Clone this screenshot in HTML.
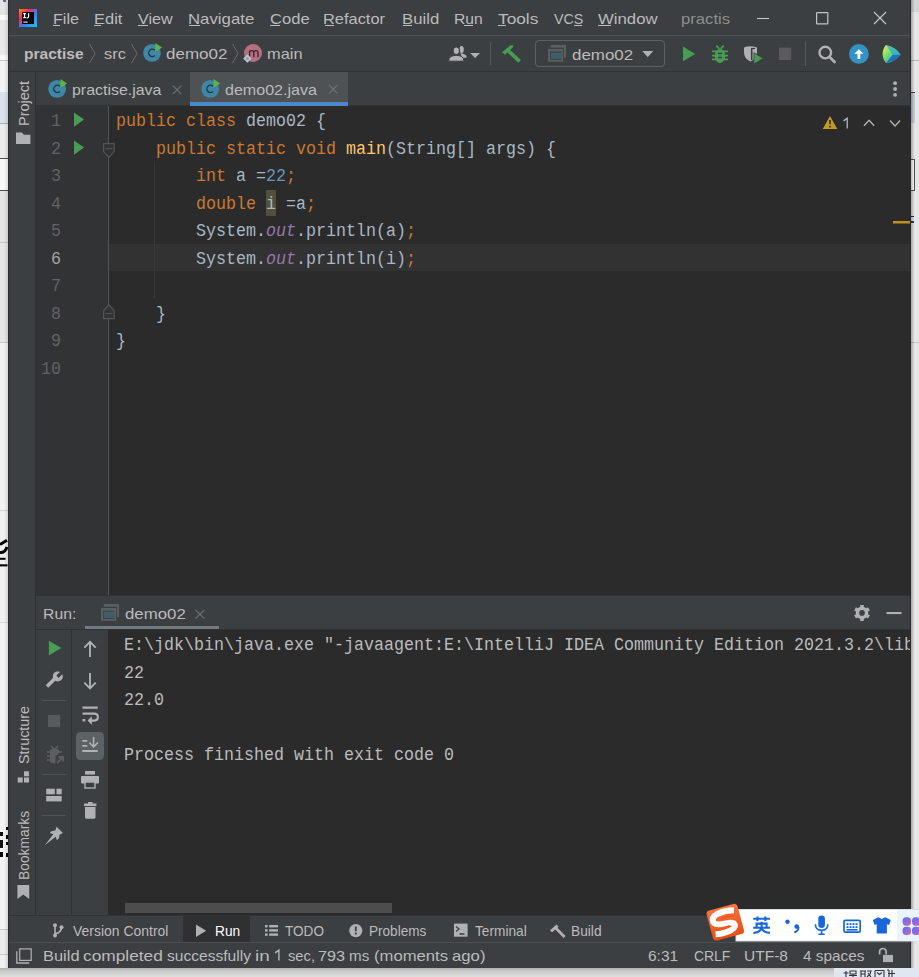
<!DOCTYPE html>
<html><head><meta charset="utf-8">
<style>
*{margin:0;padding:0;box-sizing:border-box}
html,body{width:919px;height:977px;overflow:hidden;background:#f0f0f0;font-family:"Liberation Sans",sans-serif;position:relative}
.a{position:absolute}
.t{position:absolute;white-space:pre}
.m{font-family:'Liberation Mono',monospace}
svg{position:absolute;overflow:visible}
</style></head><body>
<div class="a" style="left:0;top:0;width:8px;height:977px;background:#f2f2f2"></div>
<div class="a" style="left:0px;top:0px;width:8px;height:15px;background:#e2e4e6;"></div>
<div class="a" style="left:3px;top:0px;width:3px;height:2px;background:#6a6a90;"></div>
<div class="a" style="left:0px;top:15px;width:8px;height:5px;background:#fafafa;"></div>
<div class="a" style="left:0px;top:20px;width:8px;height:35px;background:#e9e9e9;"></div>
<div class="a" style="left:0px;top:55px;width:8px;height:5px;background:#f8f8f8;"></div>
<div class="a" style="left:0px;top:60px;width:8px;height:1px;background:#c8c8c8;"></div>
<div class="a" style="left:0px;top:61px;width:8px;height:31px;background:#f3f3f3;"></div>
<div class="a" style="left:0px;top:92px;width:8px;height:31px;background:#d9e3ee;"></div>
<div class="a" style="left:0px;top:123px;width:8px;height:1px;background:#a8b0b8;"></div>
<div class="a" style="left:0px;top:124px;width:8px;height:34px;background:#ececec;"></div>
<div class="a" style="left:0px;top:158px;width:8px;height:1px;background:#505050;"></div>
<div class="a" style="left:0px;top:159px;width:8px;height:31px;background:#f8f8f8;"></div>
<div class="a" style="left:0px;top:190px;width:8px;height:1px;background:#505050;"></div>
<div class="a" style="left:0px;top:191px;width:8px;height:51px;background:#e4e4e4;"></div>
<div class="a" style="left:0px;top:242px;width:8px;height:1px;background:#c4c4c4;"></div>
<div class="a" style="left:0px;top:243px;width:8px;height:99px;background:#e6e6e6;"></div>
<div class="a" style="left:0px;top:342px;width:8px;height:1px;background:#c8c8c8;"></div>
<div class="a" style="left:0px;top:343px;width:8px;height:167px;background:#f1f1f0;"></div>
<div class="a" style="left:0px;top:510px;width:8px;height:1px;background:#d0d0d0;"></div>
<div class="a" style="left:0px;top:511px;width:8px;height:111px;background:#f0f0ee;"></div>
<div class="a" style="left:0px;top:622px;width:8px;height:1px;background:#d4d4d4;"></div>
<div class="a" style="left:0px;top:623px;width:8px;height:306px;background:#f3f3f3;"></div>
<div class="a" style="left:0px;top:929px;width:8px;height:1px;background:#c8c8c8;"></div>
<div class="a" style="left:0px;top:930px;width:8px;height:24px;background:#ededed;"></div>
<div class="a" style="left:0px;top:954px;width:8px;height:1px;background:#c8c8c8;"></div>
<div class="a" style="left:0px;top:955px;width:8px;height:22px;background:#f0f0f0;"></div>
<svg class="a" style="left:0;top:0" width="8" height="977"><path d="M0 544.5L7 540.2" stroke="#000" stroke-width="3"/><path d="M0 552.5Q5 553 7 547" stroke="#000" stroke-width="3" fill="none"/><rect x="0" y="557.8" width="5.5" height="2" fill="#000"/><rect x="0" y="564.3" width="7.5" height="2.1" fill="#000"/><rect x="6" y="827" width="2" height="3" fill="#000"/><rect x="6" y="835" width="2" height="4" fill="#000"/><rect x="6" y="842" width="2" height="3" fill="#000"/><rect x="6" y="853" width="2" height="4" fill="#000"/><rect x="0" y="832" width="3" height="4" fill="#000"/><rect x="0" y="840" width="3" height="8" fill="#111"/><rect x="0" y="852" width="3" height="5" fill="#000"/></svg>
<div class="a" style="left:4px;top:0;width:4px;height:977px;background:linear-gradient(90deg,rgba(0,0,0,0),rgba(0,0,0,0.12))"></div>
<div class="a" style="left:911px;top:0;width:8px;height:977px;background:#e6e6e6"></div>
<div class="a" style="left:911px;top:0px;width:8px;height:12px;background:#d2d4d6;"></div>
<div class="a" style="left:911px;top:60px;width:8px;height:1px;background:#b8b8b8;"></div>
<div class="a" style="left:911px;top:342px;width:8px;height:1px;background:#c4c4c4;"></div>
<div class="a" style="left:911px;top:92px;width:4px;height:1px;background:#404040;"></div>
<div class="a" style="left:911px;top:93px;width:4px;height:30px;background:#c5ced8;"></div>
<div class="a" style="left:911px;top:159px;width:4px;height:32px;background:#ffffff;border:1px solid #505050;border-left:none"></div>
<div class="a" style="left:911px;top:216px;width:3px;height:1px;background:#1a2a80;"></div>
<div class="a" style="left:911px;top:221px;width:3px;height:2px;background:#2a3a90;"></div>
<div class="a" style="left:911px;top:0;width:3px;height:977px;background:linear-gradient(90deg,rgba(0,0,0,0.28),rgba(0,0,0,0.05))"></div>
<div class="a" style="left:0;top:968px;width:919px;height:9px;background:linear-gradient(#b4b4b4,#cbcbcb 40%,#dedede)"></div>
<div class="a" style="left:8px;top:0px;width:903px;height:968px;background:#3c3f41;"></div>
<div class="a" style="left:8px;top:0px;width:1px;height:968px;background:#2b2b2b;"></div>
<div class="a" style="left:910px;top:0px;width:1px;height:968px;background:#2b2b2b;"></div>
<div class="a" style="left:9px;top:35px;width:901px;height:1px;background:#4f5051;"></div>
<div class="a" style="left:9px;top:71px;width:901px;height:1px;background:#2f3133;"></div>
<div class="a" style="left:35px;top:72px;width:1px;height:844px;background:#2f3133;"></div>
<div class="a" style="left:190px;top:72px;width:158px;height:33px;background:#4e5254;"></div>
<div class="a" style="left:36px;top:105px;width:874px;height:1px;background:#323232;"></div>
<div class="a" style="left:190px;top:102px;width:158px;height:4px;background:#4a88c7;"></div>
<div class="a" style="left:36px;top:106px;width:874px;height:489px;background:#2b2b2b;"></div>
<div class="a" style="left:36px;top:106px;width:72px;height:489px;background:#313335;"></div>
<div class="a" style="left:108px;top:106px;width:1px;height:489px;background:#555555;"></div>
<div class="a" style="left:109px;top:244px;width:801px;height:27px;background:#323232;"></div>
<div class="a" style="left:36px;top:595px;width:874px;height:1px;background:#323232;"></div>
<div class="a" style="left:36px;top:596px;width:874px;height:33px;background:#3c3f41;"></div>
<div class="a" style="left:85px;top:626px;width:134px;height:3px;background:#737980;"></div>
<div class="a" style="left:36px;top:629px;width:874px;height:1px;background:#2f3133;"></div>
<div class="a" style="left:36px;top:630px;width:35px;height:286px;background:#3c3f41;"></div>
<div class="a" style="left:71px;top:630px;width:1px;height:286px;background:#323232;"></div>
<div class="a" style="left:72px;top:630px;width:36px;height:286px;background:#3c3f41;"></div>
<div class="a" style="left:108px;top:630px;width:802px;height:286px;background:#2b2b2b;"></div>
<div class="a" style="left:125px;top:903px;width:267px;height:10px;background:#4d4d4d;"></div>
<div class="a" style="left:9px;top:915px;width:901px;height:1px;background:#323232;"></div>
<div class="a" style="left:9px;top:916px;width:901px;height:26px;background:#3c3f41;"></div>
<div class="a" style="left:183px;top:916px;width:67px;height:26px;background:#2e3032;"></div>
<div class="a" style="left:9px;top:942px;width:901px;height:1px;background:#4b4d4f;"></div>
<div class="a" style="left:9px;top:943px;width:901px;height:25px;background:#3c3f41;"></div>
<svg class="a" style="left:0;top:0" width="919" height="977" viewBox="0 0 919 977"><defs><linearGradient id="ijg" x1="0" y1="0" x2="1" y2="1"><stop offset="0" stop-color="#ff8a1a"/><stop offset="0.3" stop-color="#fe2857"/><stop offset="0.55" stop-color="#3d7bf5"/><stop offset="1" stop-color="#11c8f7"/></linearGradient><linearGradient id="cwm" x1="0" y1="0" x2="1" y2="1"><stop offset="0" stop-color="#f5f04a"/><stop offset="0.5" stop-color="#5dd67a"/><stop offset="1" stop-color="#1ab0e8"/></linearGradient></defs><rect x="19" y="9" width="18" height="18" fill="url(#ijg)"/><rect x="22" y="12" width="12" height="12" fill="#0b0308"/><path d="M23.2 13.6h2.8M24.6 13.6v4M23.2 17.6h2.8M28.6 13.2v3.4q0 1.2-1.1 1.2h-1" stroke="#fff" stroke-width="1.15" fill="none"/><rect x="23.3" y="21.6" width="4.5" height="1" fill="#fff"/><path d="M757 18.5h12" stroke="#c4c4c4" stroke-width="1.1"/><rect x="816.6" y="12.6" width="11.2" height="11.2" rx="0.6" stroke="#c4c4c4" stroke-width="1.2" fill="none"/><path d="M874 12l12 12M886 12l-12 12" stroke="#c4c4c4" stroke-width="1.15"/><path d="M89.5 44l5.5 9.5l-5.5 9.5" stroke="#6b6e70" stroke-width="1" fill="none"/><path d="M131.5 44l5.5 9.5l-5.5 9.5" stroke="#6b6e70" stroke-width="1" fill="none"/><path d="M232.5 44l5.5 9.5l-5.5 9.5" stroke="#6b6e70" stroke-width="1" fill="none"/><circle cx="152" cy="52.9" r="8.9" fill="#3f87a6"/><path d="M154.8 50.3A3.6 3.6 0 1 0 154.8 55.5" stroke="#233843" stroke-width="1.4" fill="none"/><path d="M155.4 42.9l6.6 4.6l-6.6 4.2z" fill="#5fb445"/><circle cx="57.1" cy="88.9" r="8.9" fill="#3f87a6"/><path d="M59.9 86.30000000000001A3.6 3.6 0 1 0 59.9 91.5" stroke="#233843" stroke-width="1.4" fill="none"/><path d="M60.5 78.9l6.6 4.6l-6.6 4.2z" fill="#5fb445"/><circle cx="210.2" cy="88.9" r="8.9" fill="#3f87a6"/><path d="M213.0 86.30000000000001A3.6 3.6 0 1 0 213.0 91.5" stroke="#233843" stroke-width="1.4" fill="none"/><path d="M213.6 78.9l6.6 4.6l-6.6 4.2z" fill="#5fb445"/><circle cx="253" cy="53" r="9" fill="#b5707f"/><path d="M249.6 57.3v-6.6M249.6 52.4q0-1.7 2.1-1.7q2.1 0 2.1 1.9v4.7M253.8 52.4q0-1.7 2.1-1.7q2.1 0 2.1 1.9v4.7" stroke="#3b2329" stroke-width="1.3" fill="none"/><path d="M247.4 54.2l4.3 4.3l-4.3 4.3l-4.3-4.3z" fill="#b3c6cd"/><circle cx="247.4" cy="58.5" r="1.3" fill="#c47c8a"/><ellipse cx="461.6" cy="49.6" rx="2.2" ry="3.5" fill="#afb1b3"/><path d="M460.5 53.2q4.5 0.2 6.3 3.6l-0.8 1h-4z" fill="#afb1b3"/><ellipse cx="456.3" cy="50.7" rx="3.2" ry="3.8" stroke="#3c3f41" stroke-width="1.1" fill="#afb1b3"/><path d="M448.6 61.2q0.2-3.4 2.2-4.6q2-1.1 5.5-1.3q3.5 0.2 5.5 1.3q2 1.2 2.2 4.6z" stroke="#3c3f41" stroke-width="1" fill="#afb1b3"/><path d="M470.2 52.9h9.8l-4.9 5z" fill="#afb1b3"/><rect x="490" y="42" width="1" height="23" fill="#55585a"/><path d="M502 52.3L510.6 45.2L513.6 45.6L512.6 47.4L505 54.8Z" fill="#499c54"/><path d="M508.2 50.6L519.6 61.4" stroke="#499c54" stroke-width="3.7"/><rect x="535.5" y="40.5" width="129" height="26" rx="3.5" stroke="#5e6163" stroke-width="1" fill="none"/><rect x="550.8" y="44.9" width="15.2" height="2.8" fill="#595e61"/><rect x="564" y="44.9" width="2" height="13" fill="#595e61"/><rect x="548" y="48.9" width="15.2" height="12.9" fill="#595e61"/><rect x="550" y="51.6" width="11.2" height="8.2" fill="#3c3f41"/><rect x="550.8" y="52.6" width="10.2" height="6.3" fill="#3e5e6b"/><path d="M642.3 51h10.9l-5.45 6.2z" fill="#afb1b3"/><path d="M683 46.6l12.2 7.3l-12.2 7.3z" fill="#499c54"/><ellipse cx="720" cy="56" rx="5.3" ry="7" fill="#499c54"/><path d="M716.3 45.7l3 3.2M723.7 45.7l-3 3.2M712 51.3h16M712 55.6h16M712 59.4h16" stroke="#499c54" stroke-width="1.8"/><path d="M718 53.6h4M718 57.4h4" stroke="#3c3f41" stroke-width="1.5"/><path d="M744 47.5q6.5-2.5 13 0v5q0 6-6.5 9q-6.5-3-6.5-9z" fill="#afb1b3"/><path d="M751.7 49v11" stroke="#3c3f41" stroke-width="1.6"/><path d="M751 48.5h4" stroke="#3c3f41" stroke-width="1.2"/><path d="M753.9 52.7l9.2 5.7l-9.2 5.7z" fill="#499c54" stroke="#3c3f41" stroke-width="0.8"/><rect x="779" y="47.6" width="12.2" height="12.4" fill="#595b5d"/><rect x="805" y="41.5" width="1" height="24.5" fill="#55585a"/><circle cx="825.3" cy="52.6" r="5.8" stroke="#afb1b3" stroke-width="2.4" fill="none"/><path d="M829.6 57l5 5" stroke="#afb1b3" stroke-width="2.6" stroke-linecap="round"/><circle cx="858.9" cy="53.9" r="9.9" fill="#3592c4"/><path d="M858.9 49.2l-4.6 4.6h3.2v5.2h2.8v-5.2h3.2z" fill="#fff"/><path d="M886 45q5 1 9 3.8q3.5 2.2 5.6 6q-3 4-8 6.4q-3.5 1.6-6.5 1.7q-3.5-4-3.5-9q0-5 3.4-8.9z" fill="url(#cwm)"/><path d="M892.6 54.8l8-0.1q-3 4-8 6.4q-3.5 1.6-6.5 1.7z" fill="#1f5fc5" opacity="0.85"/><path d="M886 45q5 1 9 3.8q3.5 2.2 5.6 6l-8 0.1z" fill="#1fa7d8" opacity="0.6"/><path d="M172.8 85.6l8.5 8.5M181.3 85.6l-8.5 8.5" stroke="#6e7072" stroke-width="1.2"/><path d="M329 85l8.5 8.5M337.5 85l-8.5 8.5" stroke="#6e7072" stroke-width="1.2"/><circle cx="895.1" cy="83.2" r="1.9" fill="#afb1b3"/><circle cx="895.1" cy="89" r="1.9" fill="#afb1b3"/><circle cx="895.1" cy="94.8" r="1.9" fill="#afb1b3"/><path d="M830 116l7.3 13.1h-14.6z" fill="#c29a25"/><path d="M830 120v4.3M830 125.8v1.6" stroke="#2b2b2b" stroke-width="1.6"/><path d="M864 125.8l5.1-5.5l5.1 5.5M890 120.5l5.05 5.5l5.05-5.5" stroke="#afb1b3" stroke-width="1.4" fill="none"/><path d="M74 112.5l10.1 7.1l-10.1 7.1z" fill="#499c54"/><path d="M74 140.5l10.1 7.1l-10.1 7.1z" fill="#499c54"/><path d="M103.6 143.6h10.6v8l-5.3 5.8l-5.3-5.8z" stroke="#555555" stroke-width="1.2" fill="#313335"/><path d="M105.5 148.6h6.8" stroke="#555555" stroke-width="1.1"/><path d="M103.6 318.6h10.6v-8l-5.3-5.8l-5.3 5.8z" stroke="#555555" stroke-width="1.2" fill="#313335"/><path d="M105.5 313.6h6.8" stroke="#555555" stroke-width="1.1"/><rect x="154" y="161" width="1" height="137" fill="#393939"/><rect x="893" y="221" width="17" height="2.5" fill="#be9117"/><path d="M16 132.5h6l1.8 2.2h6.6v9.3h-14.4z" fill="#afb1b3"/><rect x="24" y="771.3" width="5" height="5" fill="#afb1b3"/><rect x="17.7" y="777.5" width="5" height="5" fill="#afb1b3"/><rect x="24" y="777.5" width="5" height="5" fill="#afb1b3"/><path d="M17.4 885h11.8v14l-5.9-4.6l-5.9 4.6z" fill="#afb1b3"/><rect x="103.8" y="604" width="15.2" height="2.8" fill="#595e61"/><rect x="117" y="604" width="2" height="13" fill="#595e61"/><rect x="101" y="608" width="15.2" height="12.9" fill="#595e61"/><rect x="103" y="610.7" width="11.2" height="8.2" fill="#3c3f41"/><rect x="103.8" y="611.7" width="10.2" height="6.3" fill="#3e5e6b"/><path d="M195.5 609.8l8.8 8.8M204.3 609.8l-8.8 8.8" stroke="#6e7072" stroke-width="1.2"/><path d="M860.16 604.91 L863.84 604.91 L863.66 606.72 L866.53 608.37 L868.00 607.31 L869.84 610.50 L868.18 611.24 L868.18 614.56 L869.84 615.30 L868.00 618.49 L866.53 617.43 L863.66 619.08 L863.84 620.89 L860.16 620.89 L860.34 619.08 L857.47 617.43 L856.00 618.49 L854.16 615.30 L855.82 614.56 L855.82 611.24 L854.16 610.50 L856.00 607.31 L857.47 608.37 L860.34 606.72z" fill="#afb1b3"/><circle cx="862" cy="612.9" r="2.8" fill="#3c3f41"/><rect x="886.5" y="612" width="15" height="2.1" fill="#afb1b3"/><path d="M48.9 640.8l12.3 7.3l-12.3 7.3z" fill="#499c54"/><path d="M47 686.4L55.2 678.2" stroke="#afb1b3" stroke-width="3.6"/><circle cx="57.8" cy="676.4" r="5" fill="#afb1b3"/><rect x="57.3" y="674.8" width="8" height="3.2" fill="#3c3f41" transform="rotate(-45 57.8 676.4)"/><rect x="42" y="700" width="24" height="1" fill="#505254"/><rect x="48" y="715" width="12.2" height="12" fill="#585a5c"/><rect x="42" y="774" width="24" height="1" fill="#505254"/><rect x="42" y="815" width="24" height="1" fill="#505254"/><g fill="none" stroke="#5c5e60" stroke-width="1.6"><path d="M51 746l3 3M58 746l-3 3M47 752h15M47 756h6M47 760h6"/></g><path d="M50 750q4.5-3 9 0v3l-3.5 3.5v6.5q-2 1-5.5-1z" fill="#5c5e60"/><path d="M57 763l6-6M58.5 757h4.5v4.5" stroke="#5c5e60" stroke-width="1.8" fill="none"/><rect x="46.2" y="788.7" width="8.6" height="5.6" fill="#afb1b3"/><rect x="56.5" y="788.7" width="5.2" height="5.6" fill="#afb1b3"/><rect x="46.2" y="796" width="15.5" height="5.4" fill="#afb1b3"/><path d="M56.6 826.8l6.3 6.3l-3.4 1.6l-0.4 3.4l-2.2 2.2l-1.2-3.6l-10.9 8.5l8.5-10.9l-3.6-1.2l2.2-2.2l3.4-0.4z" fill="#afb1b3"/><path d="M90 642v15M84.3 647.6l5.7-5.7l5.7 5.7" stroke="#afb1b3" stroke-width="1.9" fill="none"/><path d="M90 673v15M84.3 682.6l5.7 5.7l5.7-5.7" stroke="#afb1b3" stroke-width="1.9" fill="none"/><path d="M82.5 707.6h15.2M82.5 713.6h11.6q3.8 0 3.8 3.5q0 3.5-3.8 3.5h-3.6" stroke="#afb1b3" stroke-width="2.1" fill="none"/><rect x="82.5" y="719" width="2.8" height="2.4" fill="#afb1b3"/><path d="M91.8 716.2l-4.2 4.4l4.2 4.4z" fill="#afb1b3"/><rect x="76" y="732" width="28" height="28" rx="4.5" fill="#5c6164"/><path d="M82.3 740.8h5M82.3 745.8h5M82.3 751h15.4" stroke="#afb1b3" stroke-width="1.8"/><path d="M93.6 737v9.5M89.4 742.6l4.2 4.2l4.2-4.2" stroke="#afb1b3" stroke-width="1.6" fill="none"/><rect x="85" y="771" width="10" height="3.6" fill="#afb1b3"/><rect x="81" y="776" width="18" height="7.6" rx="1" fill="#afb1b3"/><rect x="85" y="782" width="10" height="6" stroke="#afb1b3" stroke-width="1.4" fill="#3c3f41"/><rect x="84" y="803.5" width="12.4" height="2.6" fill="#afb1b3"/><rect x="88" y="802" width="4.5" height="2" fill="#afb1b3"/><path d="M85 807h10.5v10.3q0 1.4-1.4 1.4h-7.7q-1.4 0-1.4-1.4z" fill="#afb1b3"/><circle cx="55" cy="925.2" r="2" fill="#afb1b3"/><circle cx="55" cy="935.6" r="2" fill="#afb1b3"/><circle cx="61.5" cy="927.2" r="2" fill="#afb1b3"/><path d="M55 925v10.5M61.5 927.2q0 5.5-6.5 6.5" stroke="#afb1b3" stroke-width="1.6" fill="none"/><path d="M196 924.4l10.2 6.3l-10.2 6.3z" fill="#afb1b3"/><rect x="265" y="925" width="2.6" height="2.4" fill="#afb1b3"/><rect x="265" y="929.2" width="2.6" height="2.4" fill="#afb1b3"/><rect x="265" y="933.4" width="2.6" height="2.4" fill="#afb1b3"/><rect x="269.2" y="925" width="8.8" height="2.4" fill="#afb1b3"/><rect x="269.2" y="929.2" width="8.8" height="2.4" fill="#afb1b3"/><rect x="269.2" y="933.4" width="8.8" height="2.4" fill="#afb1b3"/><circle cx="355.8" cy="930.6" r="6.6" fill="#afb1b3"/><path d="M355.8 926.4v4.8M355.8 932.6v1.8" stroke="#3c3f41" stroke-width="1.8"/><rect x="454" y="923.6" width="13.6" height="13.1" fill="#afb1b3"/><path d="M456 926.5l3 2.5l-3 2.5M459.5 934h5" stroke="#3c3f41" stroke-width="1.3" fill="none"/><path d="M550 930.2l6.6-5.6l2 2.1l-1.6 1.6l-5 3.9z" fill="#afb1b3"/><path d="M556 928.3l8.6 8.6" stroke="#afb1b3" stroke-width="2.8"/><path d="M16.8 951.2V963H29.2" stroke="#afb1b3" stroke-width="1.3" fill="none"/><rect x="19.7" y="948.9" width="11.5" height="11.5" stroke="#afb1b3" stroke-width="1.2" fill="none"/><path d="M879.6 954.6v-2.8a3.3 3.3 0 0 1 6.6 0v2.6" stroke="#afb1b3" stroke-width="1.7" fill="none"/><rect x="883" y="954.9" width="10" height="7.2" fill="#afb1b3"/><rect x="736" y="909.5" width="183" height="31.5" fill="#ffffff" stroke="#d8dde3" stroke-width="1"/><rect x="897" y="910" width="22" height="30.5" fill="#eaf4fb"/><defs><linearGradient id="sgo" x1="0" y1="0" x2="0" y2="1"><stop offset="0" stop-color="#f7733f"/><stop offset="1" stop-color="#e84e14"/></linearGradient></defs><g transform="translate(725.3 922.2) rotate(-15)"><rect x="-16" y="-15.5" width="32" height="31" rx="3.5" fill="url(#sgo)"/><path d="M11.5 -9.2Q3 -11.5 -5 -10.2Q-12.5 -8.5 -11.5 -3.2Q-10.5 1 0 1.2Q8.5 1.4 8.6 5Q8.4 9.2 -1.5 9.8Q-8 10.2 -12.5 9.2" stroke="#fff" stroke-width="6" fill="none"/><path d="M9 -4.5Q2 -5.5 -3 -4.2M-9 6Q-3 5.2 3 4.5" stroke="#f05a22" stroke-width="1.6" fill="none"/></g><g stroke="#1667d9" stroke-width="2.1" fill="none"><path d="M753.2 918.8H769.9M757.5 916.6V921M765.3 916.6V921M756.6 928.5V923.6H766.6V928.5M761.6 921.8V928M753.2 927.8H769.9M761.4 928.3Q759.8 932.4 753.4 932.9M761.9 928.6Q763.6 932.4 769.9 932.9"/></g><circle cx="787.5" cy="921.7" r="2.2" fill="#1667d9"/><circle cx="796.7" cy="926.6" r="2.3" fill="#1667d9"/><path d="M798.6 927q0 3.5-4.3 5.6" stroke="#1667d9" stroke-width="1.8" fill="none"/><rect x="818.3" y="915.5" width="6.6" height="12.5" rx="3.3" fill="#1667d9"/><path d="M815.4 924.2q0 6 6.2 6q6.2 0 6.2-6M821.6 930.2v3.8M818.5 934.3h6.2" stroke="#1667d9" stroke-width="1.6" fill="none"/><rect x="844" y="920.3" width="16.2" height="11.8" rx="1.2" stroke="#1667d9" stroke-width="1.7" fill="none"/><rect x="846.5" y="923.2" width="2" height="1.8" fill="#1667d9"/><rect x="849.5" y="923.2" width="2" height="1.8" fill="#1667d9"/><rect x="852.5" y="923.2" width="2" height="1.8" fill="#1667d9"/><rect x="855.5" y="923.2" width="2" height="1.8" fill="#1667d9"/><rect x="846.5" y="926.2" width="2" height="1.8" fill="#1667d9"/><rect x="849.5" y="926.2" width="2" height="1.8" fill="#1667d9"/><rect x="852.5" y="926.2" width="2" height="1.8" fill="#1667d9"/><rect x="855.5" y="926.2" width="2" height="1.8" fill="#1667d9"/><rect x="846.5" y="929" width="11" height="1.6" fill="#1667d9"/><path d="M878.3 917.3l3.5 1.6l3.5-1.6l5.4 2.8l-1.6 4.8l-2.2-0.7v9.2h-10.2v-9.2l-2.2 0.7l-1.6-4.8z" fill="#1667d9"/><defs><linearGradient id="flw" x1="0" y1="0" x2="1" y2="1"><stop offset="0" stop-color="#5b6cf5"/><stop offset="0.5" stop-color="#8a6ae8"/><stop offset="1" stop-color="#e8607a"/></linearGradient></defs><g fill="url(#flw)"><rect x="902.6" y="917.3" width="8.4" height="8.4" rx="3.6"/><rect x="912" y="917.3" width="8.4" height="8.4" rx="3.6"/><rect x="902.6" y="926.7" width="8.4" height="8.4" rx="3.6"/><rect x="912" y="926.7" width="8.4" height="8.4" rx="3.6"/></g><rect x="834" y="968" width="85" height="9" fill="#dfe8f2"/><g stroke="#333" stroke-width="1.1" fill="none"><path d="M846 971v6M843.5 973h5M850 971h6v3h-6zM849 975.5h8M853 974v3"/><path d="M860 971h6M861 971v6M865 971v6M861 974h4M867 971h4l-1 3l-3 3M868 973l3 4"/><path d="M875 970.5h9v6.5M875 970.5v6.5M877 972.5l2.5 2l2.5-2"/><path d="M889 970v7M892 970v7M888 973.5h7M889 970h-2"/></g><path d="M843.6 120.9L847.2 118.4V128.6" stroke="#a9b7c6" stroke-width="1.35" fill="none"/><path d="M275.2 952.9L278.9 950.2V960.5" stroke="#bbbbbb" stroke-width="1.35" fill="none"/></svg>
<div class="t" style="left:52.71px;top:11.00px;font-size:15px;line-height:15px;color:#bbbbbb;font-family:'Liberation Sans';transform:scaleX(1.0762);transform-origin:0 0;">File</div>
<div class="t" style="left:93.68px;top:11.00px;font-size:15px;line-height:15px;color:#bbbbbb;font-family:'Liberation Sans';transform:scaleX(1.0976);transform-origin:0 0;">Edit</div>
<div class="t" style="left:138.19px;top:11.00px;font-size:15px;line-height:15px;color:#bbbbbb;font-family:'Liberation Sans';transform:scaleX(1.0745);transform-origin:0 0;">View</div>
<div class="t" style="left:188.06px;top:11.00px;font-size:15px;line-height:15px;color:#bbbbbb;font-family:'Liberation Sans';transform:scaleX(1.1185);transform-origin:0 0;">Navigate</div>
<div class="t" style="left:269.51px;top:11.00px;font-size:15px;line-height:15px;color:#bbbbbb;font-family:'Liberation Sans';transform:scaleX(1.1076);transform-origin:0 0;">Code</div>
<div class="t" style="left:323.49px;top:11.00px;font-size:15px;line-height:15px;color:#bbbbbb;font-family:'Liberation Sans';transform:scaleX(1.0940);transform-origin:0 0;">Refactor</div>
<div class="t" style="left:402.06px;top:11.00px;font-size:15px;line-height:15px;color:#bbbbbb;font-family:'Liberation Sans';transform:scaleX(1.1154);transform-origin:0 0;">Build</div>
<div class="t" style="left:453.75px;top:11.00px;font-size:15px;line-height:15px;color:#bbbbbb;font-family:'Liberation Sans';transform:scaleX(1.0433);transform-origin:0 0;">Run</div>
<div class="t" style="left:497.85px;top:11.00px;font-size:15px;line-height:15px;color:#bbbbbb;font-family:'Liberation Sans';transform:scaleX(1.1520);transform-origin:0 0;">Tools</div>
<div class="t" style="left:553.80px;top:11.00px;font-size:15px;line-height:15px;color:#bbbbbb;font-family:'Liberation Sans';transform:scaleX(0.9533);transform-origin:0 0;">VCS</div>
<div class="t" style="left:598.19px;top:11.00px;font-size:15px;line-height:15px;color:#bbbbbb;font-family:'Liberation Sans';transform:scaleX(1.1163);transform-origin:0 0;">Window</div>
<div class="a" style="left:53px;top:25px;width:7px;height:1px;background:#bbbbbb;"></div>
<div class="a" style="left:94px;top:25px;width:7px;height:1px;background:#bbbbbb;"></div>
<div class="a" style="left:138px;top:25px;width:10px;height:1px;background:#bbbbbb;"></div>
<div class="a" style="left:189px;top:25px;width:11px;height:1px;background:#bbbbbb;"></div>
<div class="a" style="left:270px;top:25px;width:10px;height:1px;background:#bbbbbb;"></div>
<div class="a" style="left:325px;top:25px;width:9px;height:1px;background:#bbbbbb;"></div>
<div class="a" style="left:403px;top:25px;width:9px;height:1px;background:#bbbbbb;"></div>
<div class="a" style="left:464px;top:25px;width:9px;height:1px;background:#bbbbbb;"></div>
<div class="a" style="left:498px;top:25px;width:8px;height:1px;background:#bbbbbb;"></div>
<div class="a" style="left:574px;top:25px;width:8px;height:1px;background:#bbbbbb;"></div>
<div class="a" style="left:598px;top:25px;width:13px;height:1px;background:#bbbbbb;"></div>
<div class="t" style="left:681.49px;top:11.00px;font-size:15px;line-height:15px;color:#8e8e8e;font-family:'Liberation Sans';transform:scaleX(1.1101);transform-origin:0 0;">practis</div>
<div class="t" style="left:23.56px;top:45.50px;font-size:15px;line-height:15px;color:#bbbbbb;font-family:'Liberation Sans';font-weight:bold;transform:scaleX(1.0357);transform-origin:0 0;">practise</div>
<div class="t" style="left:103.76px;top:45.50px;font-size:15px;line-height:15px;color:#bbbbbb;font-family:'Liberation Sans';transform:scaleX(1.0937);transform-origin:0 0;">src</div>
<div class="t" style="left:165.52px;top:45.50px;font-size:15px;line-height:15px;color:#bbbbbb;font-family:'Liberation Sans';transform:scaleX(1.1342);transform-origin:0 0;">demo02</div>
<div class="t" style="left:266.91px;top:45.50px;font-size:15px;line-height:15px;color:#bbbbbb;font-family:'Liberation Sans';transform:scaleX(1.0915);transform-origin:0 0;">main</div>
<div class="t" style="left:572.12px;top:46.50px;font-size:15px;line-height:15px;color:#bbbbbb;font-family:'Liberation Sans';transform:scaleX(1.1285);transform-origin:0 0;">demo02</div>
<div class="t" style="left:71.84px;top:81.60px;font-size:15px;line-height:15px;color:#bbbbbb;font-family:'Liberation Sans';transform:scaleX(1.0612);transform-origin:0 0;">practise.java</div>
<div class="t" style="left:225.36px;top:81.60px;font-size:15px;line-height:15px;color:#bbbbbb;font-family:'Liberation Sans';transform:scaleX(1.0703);transform-origin:0 0;">demo02.java</div>
<div class="t" style="left:43.44px;top:606.00px;font-size:15px;line-height:15px;color:#bbbbbb;font-family:'Liberation Sans';transform:scaleX(1.0515);transform-origin:0 0;">Run:</div>
<div class="t" style="left:125.33px;top:606.00px;font-size:15px;line-height:15px;color:#bbbbbb;font-family:'Liberation Sans';transform:scaleX(1.1210);transform-origin:0 0;">demo02</div>
<div class="t" style="left:72.81px;top:923.00px;font-size:15px;line-height:15px;color:#bbbbbb;font-family:'Liberation Sans';transform:scaleX(0.9310);transform-origin:0 0;">Version Control</div>
<div class="t" style="left:214.60px;top:923.00px;font-size:15px;line-height:15px;color:#ffffff;font-family:'Liberation Sans';transform:scaleX(0.9134);transform-origin:0 0;">Run</div>
<div class="t" style="left:284.53px;top:923.00px;font-size:15px;line-height:15px;color:#bbbbbb;font-family:'Liberation Sans';transform:scaleX(0.9050);transform-origin:0 0;">TODO</div>
<div class="t" style="left:368.61px;top:923.00px;font-size:15px;line-height:15px;color:#bbbbbb;font-family:'Liberation Sans';transform:scaleX(0.9044);transform-origin:0 0;">Problems</div>
<div class="t" style="left:474.73px;top:923.00px;font-size:15px;line-height:15px;color:#bbbbbb;font-family:'Liberation Sans';transform:scaleX(0.9134);transform-origin:0 0;">Terminal</div>
<div class="t" style="left:571.30px;top:923.00px;font-size:15px;line-height:15px;color:#bbbbbb;font-family:'Liberation Sans';transform:scaleX(0.9167);transform-origin:0 0;">Build</div>
<div class="t" style="left:42.68px;top:947.50px;font-size:15px;line-height:15px;color:#bbbbbb;font-family:'Liberation Sans';transform:scaleX(1.0962);transform-origin:0 0;">Build</div>
<div class="t" style="left:83.11px;top:947.50px;font-size:15px;line-height:15px;color:#bbbbbb;font-family:'Liberation Sans';transform:scaleX(1.1536);transform-origin:0 0;">completed</div>
<div class="t" style="left:167.38px;top:947.50px;font-size:15px;line-height:15px;color:#bbbbbb;font-family:'Liberation Sans';transform:scaleX(1.0385);transform-origin:0 0;">successfully</div>
<div class="t" style="left:255.34px;top:947.50px;font-size:15px;line-height:15px;color:#bbbbbb;font-family:'Liberation Sans';transform:scaleX(1.2577);transform-origin:0 0;">in</div>
<div class="t" style="left:287.61px;top:947.50px;font-size:15px;line-height:15px;color:#bbbbbb;font-family:'Liberation Sans';transform:scaleX(0.9805);transform-origin:0 0;">sec,</div>
<div class="t" style="left:317.94px;top:947.50px;font-size:15px;line-height:15px;color:#bbbbbb;font-family:'Liberation Sans';transform:scaleX(1.0805);transform-origin:0 0;">793</div>
<div class="t" style="left:349.09px;top:947.50px;font-size:15px;line-height:15px;color:#bbbbbb;font-family:'Liberation Sans';transform:scaleX(1.0108);transform-origin:0 0;">ms</div>
<div class="t" style="left:373.60px;top:947.50px;font-size:15px;line-height:15px;color:#bbbbbb;font-family:'Liberation Sans';transform:scaleX(1.1103);transform-origin:0 0;">(moments</div>
<div class="t" style="left:451.73px;top:947.50px;font-size:15px;line-height:15px;color:#bbbbbb;font-family:'Liberation Sans';transform:scaleX(1.1158);transform-origin:0 0;">ago)</div>
<div class="t" style="left:647.77px;top:948.00px;font-size:15px;line-height:15px;color:#bbbbbb;font-family:'Liberation Sans';transform:scaleX(1.0325);transform-origin:0 0;">6:31</div>
<div class="t" style="left:693.56px;top:948.00px;font-size:15px;line-height:15px;color:#bbbbbb;font-family:'Liberation Sans';transform:scaleX(0.9286);transform-origin:0 0;">CRLF</div>
<div class="t" style="left:743.86px;top:948.00px;font-size:15px;line-height:15px;color:#bbbbbb;font-family:'Liberation Sans';transform:scaleX(1.0343);transform-origin:0 0;">UTF-8</div>
<div class="t" style="left:803.19px;top:948.00px;font-size:15px;line-height:15px;color:#bbbbbb;font-family:'Liberation Sans';transform:scaleX(1.0236);transform-origin:0 0;">4 spaces</div>
<div class="t" style="left:16.40px;top:125.56px;font-size:15px;line-height:15px;color:#bbbbbb;transform-origin:0 0;transform:rotate(-90deg) scaleX(0.9648);">Project</div>
<div class="t" style="left:16.00px;top:763.77px;font-size:15px;line-height:15px;color:#bbbbbb;transform-origin:0 0;transform:rotate(-90deg) scaleX(0.9529);">Structure</div>
<div class="t" style="left:15.80px;top:879.81px;font-size:15px;line-height:15px;color:#bbbbbb;transform-origin:0 0;transform:rotate(-90deg) scaleX(0.9209);">Bookmarks</div>
<div class="a" style="left:266px;top:190px;width:10px;height:26px;background:#52503a;"></div>
<div class="t m" style="left:116.00px;top:112.20px;font-size:18px;line-height:18px;color:#cc7832;transform:scaleX(0.9258);transform-origin:0 0;">public</div>
<div class="t m" style="left:186.00px;top:112.20px;font-size:18px;line-height:18px;color:#cc7832;transform:scaleX(0.9258);transform-origin:0 0;">class</div>
<div class="t m" style="left:246.00px;top:112.20px;font-size:18px;line-height:18px;color:#a9b7c6;transform:scaleX(0.9258);transform-origin:0 0;">demo02 {</div>
<div class="t m" style="left:156.00px;top:139.70px;font-size:18px;line-height:18px;color:#cc7832;transform:scaleX(0.9258);transform-origin:0 0;">public</div>
<div class="t m" style="left:226.00px;top:139.70px;font-size:18px;line-height:18px;color:#cc7832;transform:scaleX(0.9258);transform-origin:0 0;">static</div>
<div class="t m" style="left:296.00px;top:139.70px;font-size:18px;line-height:18px;color:#cc7832;transform:scaleX(0.9258);transform-origin:0 0;">void</div>
<div class="t m" style="left:346.00px;top:139.70px;font-size:18px;line-height:18px;color:#ffc66d;transform:scaleX(0.9258);transform-origin:0 0;">main</div>
<div class="t m" style="left:386.00px;top:139.70px;font-size:18px;line-height:18px;color:#a9b7c6;transform:scaleX(0.9258);transform-origin:0 0;">(String[] args) {</div>
<div class="t m" style="left:196.00px;top:167.20px;font-size:18px;line-height:18px;color:#cc7832;transform:scaleX(0.9258);transform-origin:0 0;">int</div>
<div class="t m" style="left:236.00px;top:167.20px;font-size:18px;line-height:18px;color:#a9b7c6;transform:scaleX(0.9258);transform-origin:0 0;">a =</div>
<div class="t m" style="left:266.00px;top:167.20px;font-size:18px;line-height:18px;color:#6897bb;transform:scaleX(0.9258);transform-origin:0 0;">22</div>
<div class="t m" style="left:286.00px;top:167.20px;font-size:18px;line-height:18px;color:#cc7832;transform:scaleX(0.9258);transform-origin:0 0;">;</div>
<div class="t m" style="left:196.00px;top:194.70px;font-size:18px;line-height:18px;color:#cc7832;transform:scaleX(0.9258);transform-origin:0 0;">double</div>
<div class="t m" style="left:266.00px;top:194.70px;font-size:18px;line-height:18px;color:#a9b7c6;transform:scaleX(0.9258);transform-origin:0 0;">i =a</div>
<div class="t m" style="left:306.00px;top:194.70px;font-size:18px;line-height:18px;color:#cc7832;transform:scaleX(0.9258);transform-origin:0 0;">;</div>
<div class="t m" style="left:196.00px;top:222.20px;font-size:18px;line-height:18px;color:#a9b7c6;transform:scaleX(0.9258);transform-origin:0 0;">System.</div>
<div class="t m" style="left:266.00px;top:222.20px;font-size:18px;line-height:18px;color:#9876aa;transform:scaleX(0.9258);transform-origin:0 0;font-style:italic;">out</div>
<div class="t m" style="left:296.00px;top:222.20px;font-size:18px;line-height:18px;color:#a9b7c6;transform:scaleX(0.9258);transform-origin:0 0;">.println(a)</div>
<div class="t m" style="left:406.00px;top:222.20px;font-size:18px;line-height:18px;color:#cc7832;transform:scaleX(0.9258);transform-origin:0 0;">;</div>
<div class="t m" style="left:196.00px;top:249.70px;font-size:18px;line-height:18px;color:#a9b7c6;transform:scaleX(0.9258);transform-origin:0 0;">System.</div>
<div class="t m" style="left:266.00px;top:249.70px;font-size:18px;line-height:18px;color:#9876aa;transform:scaleX(0.9258);transform-origin:0 0;font-style:italic;">out</div>
<div class="t m" style="left:296.00px;top:249.70px;font-size:18px;line-height:18px;color:#a9b7c6;transform:scaleX(0.9258);transform-origin:0 0;">.println(i)</div>
<div class="t m" style="left:406.00px;top:249.70px;font-size:18px;line-height:18px;color:#cc7832;transform:scaleX(0.9258);transform-origin:0 0;">;</div>
<div class="t m" style="left:156.00px;top:304.70px;font-size:18px;line-height:18px;color:#a9b7c6;transform:scaleX(0.9258);transform-origin:0 0;">}</div>
<div class="t m" style="left:116.00px;top:332.20px;font-size:18px;line-height:18px;color:#a9b7c6;transform:scaleX(0.9258);transform-origin:0 0;">}</div>
<div class="t m" style="left:50.50px;top:112.20px;font-size:18px;line-height:18px;color:#606366;transform:scaleX(0.9258);transform-origin:0 0;">1</div>
<div class="t m" style="left:50.50px;top:139.70px;font-size:18px;line-height:18px;color:#606366;transform:scaleX(0.9258);transform-origin:0 0;">2</div>
<div class="t m" style="left:50.50px;top:167.20px;font-size:18px;line-height:18px;color:#606366;transform:scaleX(0.9258);transform-origin:0 0;">3</div>
<div class="t m" style="left:50.50px;top:194.70px;font-size:18px;line-height:18px;color:#606366;transform:scaleX(0.9258);transform-origin:0 0;">4</div>
<div class="t m" style="left:50.50px;top:222.20px;font-size:18px;line-height:18px;color:#606366;transform:scaleX(0.9258);transform-origin:0 0;">5</div>
<div class="t m" style="left:50.50px;top:249.70px;font-size:18px;line-height:18px;color:#a4a3a3;transform:scaleX(0.9258);transform-origin:0 0;">6</div>
<div class="t m" style="left:50.50px;top:277.20px;font-size:18px;line-height:18px;color:#606366;transform:scaleX(0.9258);transform-origin:0 0;">7</div>
<div class="t m" style="left:50.50px;top:304.70px;font-size:18px;line-height:18px;color:#606366;transform:scaleX(0.9258);transform-origin:0 0;">8</div>
<div class="t m" style="left:50.50px;top:332.20px;font-size:18px;line-height:18px;color:#606366;transform:scaleX(0.9258);transform-origin:0 0;">9</div>
<div class="t m" style="left:40.50px;top:359.70px;font-size:18px;line-height:18px;color:#606366;transform:scaleX(0.9258);transform-origin:0 0;">10</div>
<div class="a" style="left:0;top:0;width:910px;height:977px;overflow:hidden">
<div class="t m" style="left:124.00px;top:636.20px;font-size:18px;line-height:18px;color:#bbbbbb;transform:scaleX(0.9258);transform-origin:0 0;">E:\jdk\bin\java.exe "-javaagent:E:\IntelliJ IDEA Community Edition 2021.3.2\lib</div>
<div class="t m" style="left:124.00px;top:663.70px;font-size:18px;line-height:18px;color:#bbbbbb;transform:scaleX(0.9258);transform-origin:0 0;">22</div>
<div class="t m" style="left:124.00px;top:691.20px;font-size:18px;line-height:18px;color:#bbbbbb;transform:scaleX(0.9258);transform-origin:0 0;">22.0</div>
<div class="t m" style="left:124.00px;top:746.20px;font-size:18px;line-height:18px;color:#bbbbbb;transform:scaleX(0.9258);transform-origin:0 0;">Process finished with exit code 0</div>
</div>
</body></html>
